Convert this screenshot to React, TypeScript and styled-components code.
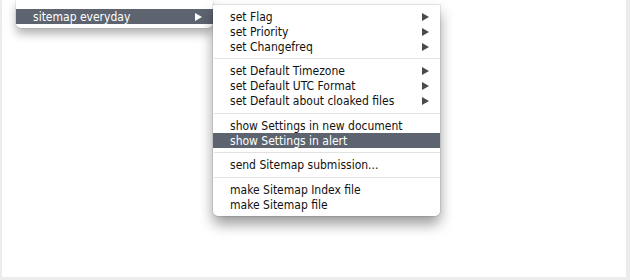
import styled, { createGlobalStyle } from "styled-components";

const GlobalStyle = createGlobalStyle`
  html, body {
    margin: 0;
    padding: 0;
    background: #ececec;
  }
  body {
    width: 630px;
    height: 280px;
    overflow: hidden;
    font-family: "DejaVu Sans Condensed", "DejaVu Sans", "Liberation Sans", sans-serif;
  }
`;

const Frame = styled.div`
  box-sizing: border-box;
  width: 624px;
  height: 277px;
  margin-left: 2px;
  background: #ffffff;
  display: flex;
  align-items: flex-start;
  padding-left: 14px;
`;

const Menu = styled.div<{ $top: number; $width: number }>`
  box-sizing: border-box;
  width: ${(p) => p.$width}px;
  margin-top: ${(p) => p.$top}px;
  padding: 4px 0;
  background: #ffffff;
  border-radius: 0 0 5px 5px;
  box-shadow: 0 0 0 1px rgba(0, 0, 0, 0.08), 0 8px 14px rgba(0, 0, 0, 0.4);
  display: flex;
  flex-direction: column;
`;

const ParentMenu = styled(Menu)`
  padding-top: 9px;
  padding-bottom: 4px;
  box-shadow: 0 0 0 1px rgba(0, 0, 0, 0.06), 0 6px 10px rgba(0, 0, 0, 0.3);
`;

const Item = styled.div<{ $active?: boolean; $indent: number }>`
  height: 15px;
  display: flex;
  align-items: center;
  justify-content: space-between;
  padding: 0 11px 0 ${(p) => p.$indent}px;
  font-size: 12px;
  color: ${(p) => (p.$active ? "#ffffff" : "#111111")};
  background: ${(p) => (p.$active ? "#5d6470" : "transparent")};
  white-space: nowrap;
`;

const Arrow = styled.span<{ $active?: boolean }>`
  width: 0;
  height: 0;
  border-top: 4px solid transparent;
  border-bottom: 4px solid transparent;
  border-left: 7px solid ${(p) => (p.$active ? "#ffffff" : "#4a4a4a")};
`;

const Separator = styled.div`
  height: 1px;
  margin: 4px 0 4.5px 1px;
  background: #e2e2e2;
`;

type Entry = { label: string; sub?: boolean; active?: boolean } | "sep";

const entries: Entry[] = [
  { label: "set Flag", sub: true },
  { label: "set Priority", sub: true },
  { label: "set Changefreq", sub: true },
  "sep",
  { label: "set Default Timezone", sub: true },
  { label: "set Default UTC Format", sub: true },
  { label: "set Default about cloaked files", sub: true },
  "sep",
  { label: "show Settings in new document" },
  { label: "show Settings in alert", active: true },
  "sep",
  { label: "send Sitemap submission..." },
  "sep",
  { label: "make Sitemap Index file" },
  { label: "make Sitemap file" },
];

export default function App() {
  return (
    <>
      <GlobalStyle />
      <Frame>
        <ParentMenu $top={0} $width={197}>
          <Item $active $indent={17}>
            <span>sitemap everyday</span>
            <Arrow $active />
          </Item>
        </ParentMenu>
        <Menu $top={5} $width={227}>
          {entries.map((e, i) =>
            e === "sep" ? (
              <Separator key={i} />
            ) : (
              <Item key={i} $active={e.active} $indent={17}>
                <span>{e.label}</span>
                {e.sub ? <Arrow /> : null}
              </Item>
            )
          )}
        </Menu>
      </Frame>
    </>
  );
}
